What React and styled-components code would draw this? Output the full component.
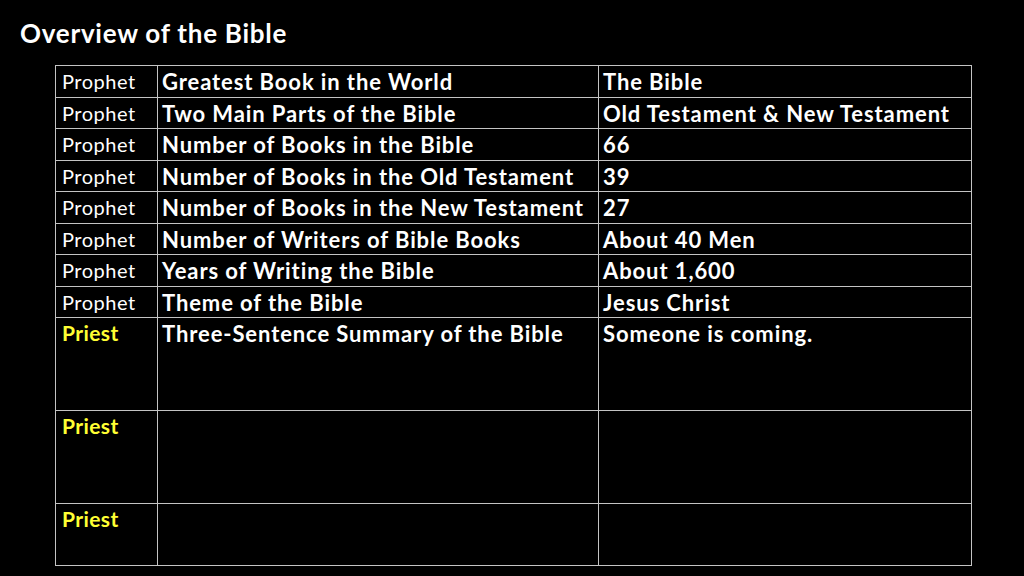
import React from 'react';
import styled, { createGlobalStyle } from 'styled-components';

const GlobalStyle = createGlobalStyle`
  html, body {
    margin: 0;
    padding: 0;
    background: #000;
  }
  body {
    width: 1024px;
    height: 576px;
    overflow: hidden;
    font-family: Lato, "Open Sans", sans-serif;
    color: #fff;
  }
`;

const Slide = styled.div`
  width: 1024px;
  height: 576px;
  box-sizing: border-box;
  padding: 16px 0 0 20px;
  background: #000;
`;

const Title = styled.h1`
  margin: 0 0 15px 0;
  font-size: 26px;
  line-height: 34px;
  letter-spacing: 0.75px;
  font-weight: 700;
  color: #fff;
`;

const Grid = styled.table`
  margin-left: 35px;
  width: 916px;
  border-collapse: collapse;
  table-layout: fixed;
`;

const Row = styled.tr`
  height: ${p => p.$tall ? 93 : p.$last ? 62 : 31.5}px;
`;

const Cell = styled.td`
  border: 1.5px solid #c4c4c4;
  padding: 3px 4px 0 4px;
  vertical-align: top;
  font-size: 22px;
  line-height: 26px;
  letter-spacing: 0.9px;
  font-weight: 700;
  color: #fff;
  white-space: nowrap;
  overflow: hidden;
`;

const RoleCell = styled(Cell)`
  padding-top: 2px;
  padding-left: 6px;
  font-size: ${p => p.$priest ? 21 : 20}px;
  letter-spacing: ${p => p.$priest ? 0.4 : 0.5}px;
  font-weight: ${p => p.$priest ? 700 : 400};
  color: ${p => p.$priest ? '#ffff33' : '#fff'};
`;

const rows = [
  ['Prophet', 'Greatest Book in the World', 'The Bible'],
  ['Prophet', 'Two Main Parts of the Bible', 'Old Testament & New Testament'],
  ['Prophet', 'Number of Books in the Bible', '66'],
  ['Prophet', 'Number of Books in the Old Testament', '39'],
  ['Prophet', 'Number of Books in the New Testament', '27'],
  ['Prophet', 'Number of Writers of Bible Books', 'About 40 Men'],
  ['Prophet', 'Years of Writing the Bible', 'About 1,600'],
  ['Prophet', 'Theme of the Bible', 'Jesus Christ'],
  ['Priest', 'Three-Sentence Summary of the Bible', 'Someone is coming.'],
  ['Priest', '', ''],
  ['Priest', '', ''],
];

const App = () => (
  <Slide>
    <GlobalStyle />
    <Title>Overview of the Bible</Title>
    <Grid>
      <colgroup>
        <col style={{ width: 102 }} />
        <col style={{ width: 441 }} />
        <col style={{ width: 373 }} />
      </colgroup>
      <tbody>
        {rows.map(([role, topic, answer], i) => (
          <Row key={i} $tall={i === 8 || i === 9} $last={i === 10}>
            <RoleCell $priest={role === 'Priest'}>{role}</RoleCell>
            <Cell>{topic}</Cell>
            <Cell>{answer}</Cell>
          </Row>
        ))}
      </tbody>
    </Grid>
  </Slide>
);

export default App;
